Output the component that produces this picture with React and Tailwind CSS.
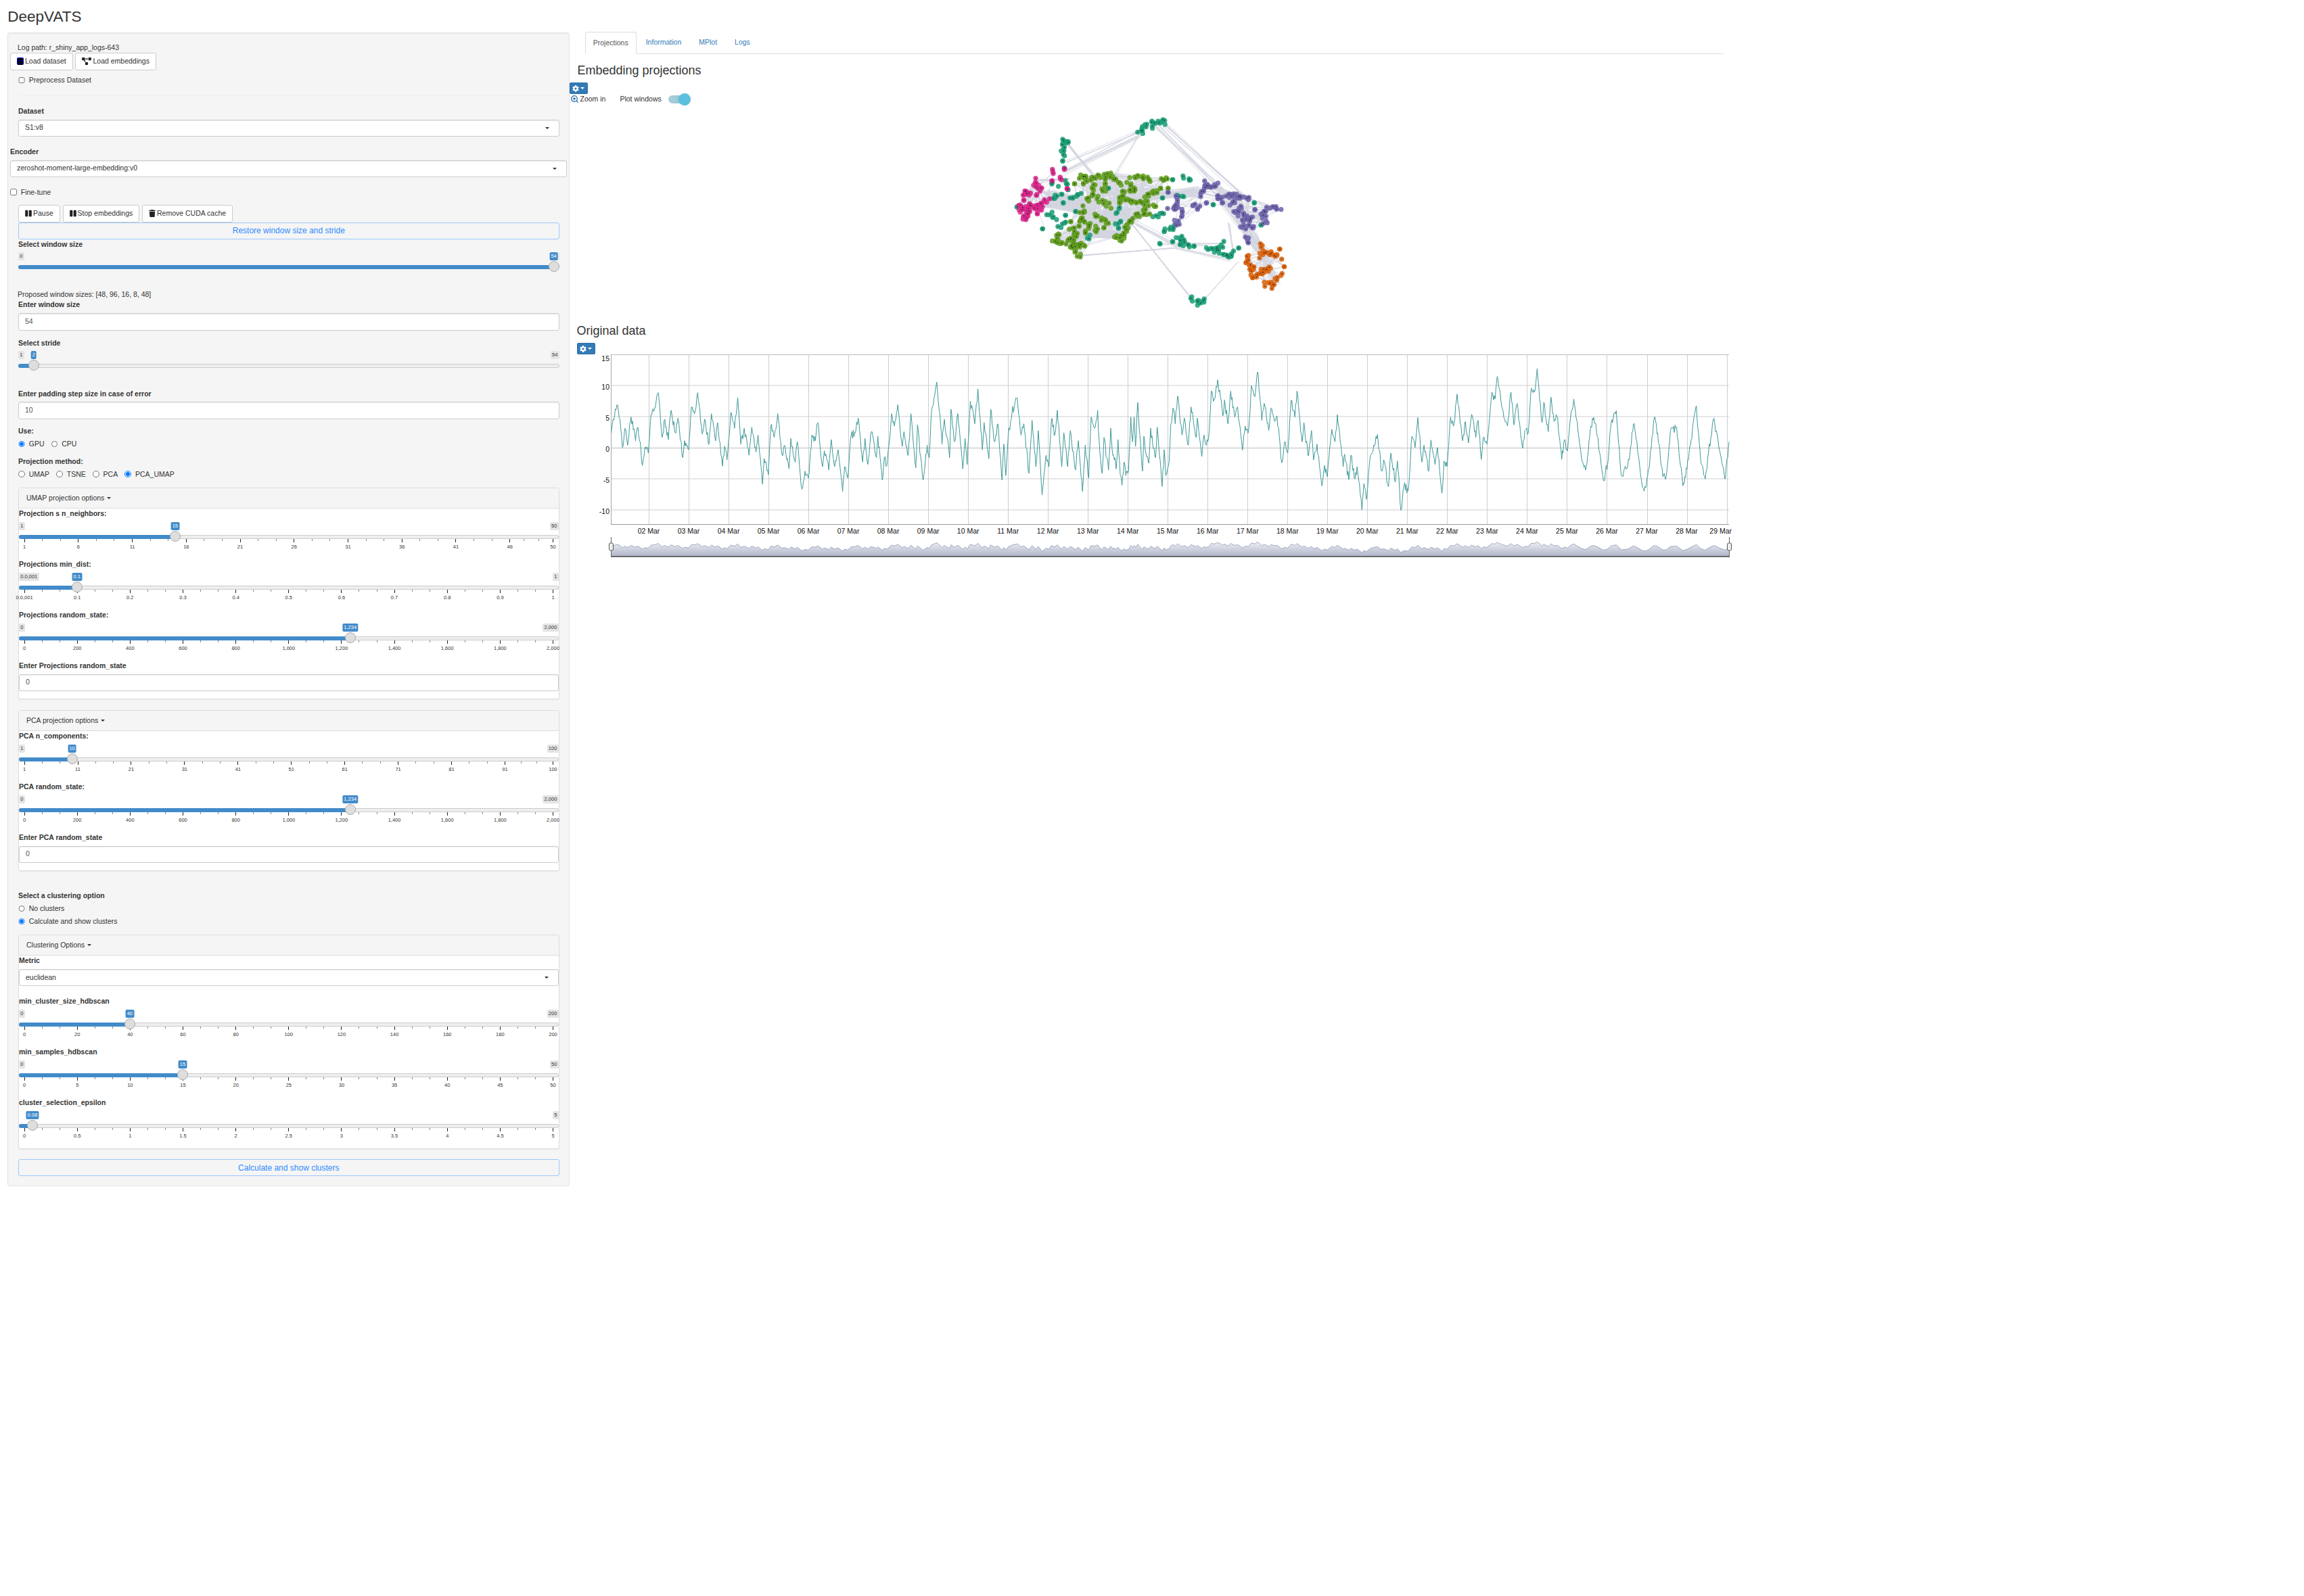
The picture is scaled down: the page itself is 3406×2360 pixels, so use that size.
import React from 'react';
import { FaPause, FaTrash, FaProjectDiagram, FaDatabase, FaCog } from 'react-icons/fa';
import { ZoomIn } from 'lucide-react';

function rng(seed) {
  let a = seed;
  return () => {
    a |= 0; a = (a + 0x6d2b79f5) | 0;
    let t = Math.imul(a ^ (a >>> 15), 1 | a);
    t = (t + Math.imul(t ^ (t >>> 7), 61 | t)) ^ t;
    return ((t ^ (t >>> 14)) >>> 0) / 4294967296;
  };
}

/* ---------- time series, traced from the picture ---------- */
const z7 = [[124,510],[130,450],[143,385],[150,450],[157,575],[165,490],[172,565],[182,440],[195,545],[202,485],[215,655],[222,575],[232,600],[240,430],[250,400],[261,332],[272,530],[280,450],[290,540],[298,410],[310,510],[318,445],[332,620],[337,545],[349,585],[357,395],[368,410],[375,332],[388,515],[395,450],[408,560],[415,425],[427,545],[433,465],[447,658],[453,570],[460,630],[471,420],[482,490],[491,355],[500,560],[510,490],[524,610],[532,485],[544,595],[550,520],[563,738],[568,625],[580,695],[587,480],[597,530],[607,425],[620,610],[626,565],[640,670],[645,535],[658,640],[664,550],[677,760],[686,680],[696,710],[706,520],[716,545],[723,465],[737,660],[742,590],[755,675],[762,540],[772,660],[782,585],[795,770],[801,660],[810,710],[820,520],[832,510],[840,445],[853,640],[860,535],[868,650],[878,505],[893,620],[897,525],[910,720],[916,620],[924,650],[937,425],[945,480],[955,385],[968,570],[973,505],[985,610],[993,425],[1007,665],[1012,475],[1028,720],[1040,565],[1046,620],[1053,410],[1060,355],[1068,285],[1083,560],[1090,450],[1105,620],[1109,405],[1120,550],[1129,425],[1143,670],[1150,535],[1156,650],[1165,370],[1178,470],[1187,315],[1200,585],[1205,465],[1219,625],[1224,405],[1235,550],[1245,470],[1257,720],[1262,560],[1268,700],[1275,520],[1286,420],[1301,355],[1312,520],[1320,470],[1335,690],[1344,455],[1355,660],[1362,500],[1373,785],[1385,610],[1393,660],[1400,450],[1410,520],[1417,410],[1430,660],[1436,510],[1447,660],[1455,500],[1470,675],[1478,545],[1490,770],[1498,565],[1508,710],[1515,440],[1525,490]];
const z12 = [[8,260],[15,400],[28,540],[36,380],[48,470],[56,525],[66,340],[75,460],[85,470],[90,520],[98,390],[108,545],[116,592],[125,490],[133,550],[145,530],[155,290],[163,400],[170,290],[176,420],[186,225],[195,370],[207,530],[213,375],[222,450],[235,495],[243,340],[255,430],[265,470],[272,335],[285,480],[294,598],[303,435],[310,550],[325,490],[332,325],[342,250],[352,320],[362,197],[372,290],[382,370],[392,295],[400,360],[410,415],[422,245],[432,305],[445,380],[450,295],[460,380],[470,465],[480,370],[490,415],[503,350],[512,175],[525,210]];
const z8 = [[0,215],[8,290],[15,375],[20,305],[30,410],[38,265],[50,380],[58,335],[72,527],[80,420],[90,440],[98,240],[108,290],[116,180],[128,395],[135,320],[148,440],[155,340],[165,400],[172,375],[186,583],[194,490],[203,540],[213,305],[224,380],[230,265],[245,490],[250,405],[262,552],[272,440],[278,570],[288,500],[302,685],[310,595],[318,645],[331,435],[340,490],[347,370],[364,600],[368,545],[380,658],[386,550],[398,655],[404,600],[418,792],[424,675],[431,745],[443,550],[452,505],[463,458],[475,620],[481,570],[495,690],[502,540],[515,668],[521,575],[531,793],[540,685],[552,708],[563,465],[572,515],[580,382],[592,580],[598,505],[612,620],[618,482],[630,590],[637,515],[650,718],[656,575],[665,600],[675,380],[685,410],[694,278],[710,485],[718,400],[727,495],[736,368],[748,470],[755,395],[764,568],[770,470],[780,500],[795,270],[804,300],[810,200],[825,340],[840,420],[850,270],[858,415],[868,320],[884,518],[890,440],[900,450],[908,260],[918,270],[926,165],[940,405],[945,315],[958,445],[966,292],[975,400],[985,380],[997,568],[1005,480],[1014,530],[1025,350],[1032,300],[1040,390],[1055,570],[1066,615],[1072,555],[1082,420],[1090,382],[1100,465],[1118,662],[1130,590],[1140,410],[1155,352],[1170,640],[1188,600],[1205,410],[1215,490],[1232,695],[1242,690],[1250,605],[1265,385],[1275,450],[1290,645],[1300,640],[1312,440],[1330,425],[1348,685],[1360,610],[1372,480],[1387,330],[1400,580],[1413,655],[1420,560],[1438,385],[1452,510],[1470,655],[1478,560],[1482,490]];

const seriesCtl = [
  ...z7.map(([x, y]) => [840 + x / 1.96, 470 + y / 3]),
  ...z12.map(([x, y]) => [1620 + x / 3, 520 + y / 3]),
  ...z8.map(([x, y]) => [1800 + x / 1.96, 490 + y / 3]),
];
const series = (() => {
  const r = rng(42);
  const out = [];
  for (let i = 0; i < seriesCtl.length - 1; i++) {
    const [x0, y0] = seriesCtl[i];
    const [x1, y1] = seriesCtl[i + 1];
    const n = Math.max(1, Math.round((x1 - x0) / 1.1));
    for (let k = 0; k < n; k++) {
      const t = k / n;
      const noise = k === 0 ? 0 : (r() - 0.5) * 13;
      out.push([x0 + (x1 - x0) * t, y0 + (y1 - y0) * t + noise]);
    }
  }
  out.push(seriesCtl[seriesCtl.length - 1]);
  return out;
})();
const seriesPath = series.map(([x, y], i) => `${i ? 'L' : 'M'}${x.toFixed(1)} ${y.toFixed(1)}`).join('');
const miniY = (y) => 801 + ((y - 545) / 210) * 16;
const miniLine = seriesCtl.map(([x, y], i) => `${i ? 'L' : 'M'}${x.toFixed(1)} ${miniY(y).toFixed(1)}`).join('');
const miniArea = `${miniLine}L2556 823L903 823Z`;

const days = ['02','03','04','05','06','07','08','09','10','11','12','13','14','15','16','17','18','19','20','21','22','23','24','25','26','27','28','29'];

function Chart() {
  const gridY = [524.5, 570, 616, 662.5, 708, 754];
  const yLabels = [['15', 530], ['10', 572], ['5', 618], ['0', 664], ['-5', 710], ['-10', 756]];
  return (
    <svg width="1730" height="310" viewBox="842 524 1730 310" className="block">
      <defs>
        <linearGradient id="miniFill" x1="0" y1="0" x2="0" y2="1">
          <stop offset="0" stopColor="#eef0f5" />
          <stop offset="1" stopColor="#aeb4c8" />
        </linearGradient>
      </defs>
      {gridY.map((y) => <line key={y} x1="903" x2="2556" y1={y} y2={y} stroke="#bdbdbd" strokeWidth="1" opacity={Number.isInteger(y) ? 0.7 : 1} />)}
      {days.map((d, i) => {
        const x = Math.round(959 + i * 59.02) + 0.5;
        return <line key={d} x1={x} x2={x} y1="524" y2="775" stroke="#cdcdcd" strokeWidth="1" />;
      })}
      <line x1="903.5" x2="903.5" y1="524" y2="775" stroke="#a8a8a8" />
      <line x1="903" x2="2556" y1="775.5" y2="775.5" stroke="#999" />
      <path d={seriesPath} fill="none" stroke="#3f9898" strokeWidth="1" />
      {yLabels.map(([t, y]) => <text key={t} x="901" y={y + 3.7} textAnchor="end" fontSize="10.5" fill="#111">{t}</text>)}
      {days.map((d, i) => (
        i === days.length - 1
          ? <text key={d} x="2560" y="789" textAnchor="end" fontSize="10.5" fill="#111">{d} Mar</text>
          : <text key={d} x={959 + i * 59.02} y="789" textAnchor="middle" fontSize="10.5" fill="#111">{d} Mar</text>
      ))}
      <path d={miniArea} fill="url(#miniFill)" />
      <path d={miniLine} fill="none" stroke="#8e98b5" strokeWidth="0.8" />
      <line x1="903" x2="2557" y1="823" y2="823" stroke="#444" strokeWidth="1.5" />
      <line x1="903.5" x2="903.5" y1="794" y2="823" stroke="#666" />
      <line x1="2556.5" x2="2556.5" y1="794" y2="823" stroke="#666" />
      <rect x="900.5" y="803" width="6" height="11" rx="2" fill="#eee" stroke="#555" />
      <rect x="2553.5" y="803" width="6" height="11" rx="2" fill="#eee" stroke="#555" />
    </svg>
  );
}

/* ---------- projection network, traced from the picture ---------- */
const clusters = [
  { color: '#1b9e77', lines: [
    [[735,145],[745,125],[770,100]], [[795,110],[795,95],[815,85],[855,97]],
    [[400,175],[420,180]], [[400,175],[397,195],[392,235]], [[393,263],[393,265]],
    [[400,295],[402,298]], [[400,350],[415,365]], [[340,365],[365,370]],
    [[415,390],[417,392]], [[470,398],[432,430]], [[365,410],[345,430]], [[388,412],[389,412]],
    [[395,450],[396,450]], [[450,488],[451,488]], [[405,505],[406,505]], [[330,495],[360,520]],
    [[400,535],[380,560]], [[303,565],[304,565]], [[595,385],[596,385]], [[630,490],[648,470]],
    [[630,535],[650,530]], [[640,562],[641,562]], [[510,595],[505,610]], [[880,347],[881,347]],
    [[930,335],[960,340]], [[905,415],[925,420]], [[835,428],[836,428]], [[800,507],[840,500]],
    [[835,570],[890,555]], [[823,630],[825,632]], [[880,622],[881,622]],
    [[905,605],[925,610],[920,630],[955,645]], [[975,642],[976,642]],
    [[1030,658],[1075,660],[1110,630]], [[1075,660],[1135,690],[1150,665]], [[1173,650],[1174,650]],
    [[1060,458],[1061,458]], [[1242,450],[1243,450]], [[1272,548],[1274,548]],
    [[960,868],[1000,900],[1025,875]], [[190,468],[191,468]],
  ] },
  { color: '#d9248a', lines: [
    [[355,300],[345,315]], [[380,330],[385,345]], [[345,352],[346,352]], [[412,387],[413,387]], [[400,300],[401,300]],
    [[265,350],[270,375],[310,380]], [[235,388],[220,412],[250,410],[285,408]],
    [[220,438],[221,438]], [[205,462],[220,515],[240,495],[240,465],[290,450],[330,435]],
    [[205,462],[240,480],[305,475]], [[280,498],[281,498]],
  ] },
  { color: '#5f9c1c', lines: [
    [[470,335],[495,330],[490,370]], [[495,340],[530,340],[600,325],[650,365]],
    [[445,365],[446,365]], [[520,400],[540,370]], [[575,395],[575,350]],
    [[530,420],[600,465]], [[495,440],[515,435]], [[490,470],[470,525],[505,540],[500,590]],
    [[530,510],[600,535]], [[540,550],[540,575]], [[575,560],[577,560]],
    [[700,332],[750,335],[790,345]], [[830,345],[860,345]],
    [[685,365],[720,385],[660,410],[650,430],[760,450],[750,490],[770,500]],
    [[760,425],[830,390]], [[860,385],[861,385]], [[780,462],[805,465]], [[645,450],[646,450]],
    [[735,500],[680,540],[670,590],[630,600],[660,615]],
    [[375,585],[355,620],[398,632]], [[430,560],[455,590],[425,610],[465,630],[425,650],[490,635]],
    [[445,670],[470,688]], [[428,533],[429,533]], [[465,553],[466,553]],
  ] },
  { color: '#6c63ab', lines: [
    [[1020,360],[1010,420]], [[1020,370],[1050,385],[1085,365]], [[1030,450],[1031,450]],
    [[1075,410],[1100,455]], [[1110,430],[1150,415],[1220,435]], [[1140,455],[1170,430]],
    [[1185,465],[1160,490],[1230,520],[1190,530]], [[1245,480],[1246,480]],
    [[1245,550],[1180,560]], [[1210,600],[1212,628]],
    [[1355,470],[1320,470],[1280,495],[1295,540]],
    [[905,425],[895,475],[868,478]], [[965,460],[1000,472]], [[925,480],[915,520]],
    [[890,535],[905,555]], [[860,403],[861,403]],
  ] },
  { color: '#d9620a', lines: [
    [[1270,640],[1285,660]], [[1265,685],[1310,670],[1360,690]], [[1355,655],[1356,655]],
    [[1215,680],[1215,715],[1240,775],[1260,770],[1310,740],[1280,745]],
    [[1375,733],[1376,733]], [[1360,765],[1335,785]], [[1290,810],[1330,810],[1315,825]], [[1240,735],[1241,735]],
  ] },
];

const network = (() => {
  const r = rng(7);
  const pts = clusters.map((c) => {
    const list = [];
    c.lines.forEach((line) => {
      for (let i = 0; i < line.length - 1; i++) {
        const [x0, y0] = line[i];
        const [x1, y1] = line[i + 1];
        const len = Math.hypot(x1 - x0, y1 - y0);
        const n = Math.max(1, Math.round(len / 8));
        for (let k = 0; k <= n; k++) {
          const t = k / n;
          const j = len < 5 ? 0 : 20;
          list.push([x0 + (x1 - x0) * t + (r() - 0.5) * j, y0 + (y1 - y0) * t + (r() - 0.5) * j]);
        }
      }
    });
    return list;
  });
  const edges = [];
  const bundle = (a, b, n, spread) => {
    for (let i = 0; i < n; i++) {
      edges.push([a[0] + (r() - 0.5) * spread, a[1] + (r() - 0.5) * spread, b[0] + (r() - 0.5) * spread, b[1] + (r() - 0.5) * spread]);
    }
  };
  const dense = (list, n, maxD) => {
    let c = 0;
    let guard = 0;
    while (c < n && guard < n * 40) {
      guard++;
      const a = list[Math.floor(r() * list.length)];
      const b = list[Math.floor(r() * list.length)];
      if (Math.hypot(a[0] - b[0], a[1] - b[1]) < maxD) { edges.push([a[0], a[1], b[0], b[1]]); c++; }
    }
  };
  dense(pts[2], 800, 200);
  dense(pts[1], 120, 110);
  dense(pts[3], 220, 150);
  dense(pts[4], 120, 110);
  bundle([330, 430], [520, 470], 130, 80);
  bundle([470, 590], [640, 590], 90, 40);
  bundle([500, 520], [680, 500], 70, 70);
  bundle([760, 420], [1000, 400], 40, 50);
  bundle([800, 100], [1100, 400], 12, 26);
  bundle([845, 100], [1210, 430], 10, 22);
  bundle([735, 145], [400, 310], 9, 30);
  bundle([750, 125], [410, 270], 4, 14);
  bundle([735, 145], [620, 340], 3, 14);
  bundle([415, 190], [960, 868], 7, 8);
  bundle([415, 190], [600, 400], 3, 10);
  bundle([1025, 875], [1170, 710], 3, 6);
  bundle([470, 686], [890, 650], 6, 8);
  bundle([890, 648], [1140, 705], 4, 10);
  bundle([830, 632], [1110, 630], 3, 8);
  bundle([890, 640], [1030, 640], 2, 6);
  bundle([1120, 400], [1340, 470], 3, 8);
  bundle([1200, 540], [1340, 800], 20, 40);
  bundle([1100, 440], [1260, 660], 14, 40);
  bundle([1240, 590], [1300, 700], 12, 30);
  bundle([1130, 540], [1150, 680], 4, 10);
  bundle([720, 540], [900, 640], 8, 24);
  bundle([280, 350], [420, 345], 8, 10);
  bundle([290, 500], [310, 560], 1, 2);
  return { pts, edges };
})();

function Network() {
  return (
    <svg width="500" height="320" viewBox="0 15 1500 960" className="block">
      {network.edges.map((e, i) => (
        <line key={i} x1={e[0]} y1={e[1]} x2={e[2]} y2={e[3]} stroke="#d3d5e0" strokeWidth="3" opacity="0.8" />
      ))}
      {network.pts.map((list, ci) => list.map((p, i) => (
        <circle key={`${ci}-${i}`} cx={p[0]} cy={p[1]} r="11" fill={clusters[ci].color} opacity="0.85" />
      )))}
      {network.pts.map((list, ci) => list.filter((_, i) => i % 2 === 0).map((p, i) => (
        <circle key={`d${ci}-${i}`} cx={p[0]} cy={p[1]} r="2.5" fill="#2b2b2b" />
      )))}
    </svg>
  );
}

/* ---------- small form widgets ---------- */
function Caret({ color }) {
  return <span className={`inline-block w-0 h-0 border-x-[3px] border-t-[3px] border-x-transparent ${color === 'white' ? 'border-t-white' : 'border-t-[#333333]'}`} />;
}

function Label({ children, className = '' }) {
  return <div className={`h-[15px] leading-[15px] font-bold text-[#333333] ${className}`}>{children}</div>;
}

function Btn({ icon, children }) {
  return (
    <div className="h-[25.5px] px-[9px] flex items-center gap-[2px] bg-white border border-[#cccccc] rounded-[3px] text-[#333333] whitespace-nowrap">
      {icon}
      <span>{children}</span>
    </div>
  );
}

function Field({ children, className = '', caret = false }) {
  return (
    <div className={`h-[25.5px] px-[9px] flex items-center justify-between bg-white border border-[#cccccc] rounded-[3px] shadow-[inset_0_1px_1px_rgba(0,0,0,0.075)] ${className}`}>
      <span>{children}</span>
      {caret && <span className="mr-[5px] flex"><Caret /></span>}
    </div>
  );
}

function Outline({ children, className = '' }) {
  return (
    <div className={`w-[799.6px] ml-[15px] h-[25px] flex items-center justify-center border border-[#9cc8fb] rounded-[3px] text-[12px] text-[#2f8bff] ${className}`}>
      {children}
    </div>
  );
}

function Radio({ label, checked = false, name, className = '' }) {
  return (
    <label className={`flex items-center gap-[6px] h-[15px] leading-[15px] ${className}`}>
      <input type="radio" name={name} checked={checked} readOnly className="w-[9.75px] h-[9.75px]" />
      <span>{label}</span>
    </label>
  );
}

function Check({ label, className = '' }) {
  return (
    <label className={`flex items-center gap-[6px] h-[15px] leading-[15px] ${className}`}>
      <input type="checkbox" className="w-[9.75px] h-[9.75px]" />
      <span>{label}</span>
    </label>
  );
}

const fmt = (n) => String(n).replace(/\B(?=(\d{3})+(?!\d))/g, ',');

function Slider({ label, min, max, value, ticks, panel = false, hideMin = false, height = 'h-[75px]' }) {
  const start = panel ? 7.6 : 8;
  const end = panel ? 789 : 791.6;
  const pos = (v) => start + ((v - min) / (max - min)) * (end - start);
  const hx = pos(value);
  return (
    <div className={`relative ${height} ${panel ? '' : 'w-[799.6px] ml-[15px]'}`}>
      <Label>{label}</Label>
      {!hideMin && (
        <span className="absolute left-0 top-[19.5px] h-[12px] leading-[12px] px-[2.25px] rounded-[2px] bg-[#e4e4e4] text-[7.5px] text-[#333333]">{fmt(min)}</span>
      )}
      <span className="absolute right-0 top-[19.5px] h-[12px] leading-[12px] px-[2.25px] rounded-[2px] bg-[#e4e4e4] text-[7.5px] text-[#333333]">{fmt(max)}</span>
      <span
        className="absolute top-[19.5px] h-[12px] leading-[12px] px-[2.25px] -translate-x-1/2 rounded-[2px] bg-[#428bca] text-[7.5px] text-white whitespace-nowrap"
        style={{ left: hx }}
      >{fmt(value)}</span>
      <div className="absolute left-0 right-0 top-[38.5px] h-[6px] rounded-full bg-[#eeeeee] border border-[#cccccc]" />
      <div className="absolute left-0 top-[38.5px] h-[6px] rounded-l-full bg-[#428bca]" style={{ width: hx }} />
      {ticks && ticks.map((t, i) => {
        const x = pos(t);
        const next = i < ticks.length - 1 ? pos(ticks[i + 1]) : null;
        return (
          <React.Fragment key={t}>
            <div className="absolute top-[44.5px] w-[1px] h-[5.5px] bg-[#222222]" style={{ left: x }} />
            {next !== null && [1, 2].map((k) => (
              <div key={k} className="absolute top-[44.5px] w-[1px] h-[3px] bg-[#888888]" style={{ left: x + ((next - x) * k) / 3 }} />
            ))}
            <span className="absolute top-[52px] h-[10px] leading-[10px] -translate-x-1/2 text-[7.5px] text-[#333333] whitespace-nowrap" style={{ left: x + 0.5 }}>{fmt(t)}</span>
          </React.Fragment>
        );
      })}
      <div className="absolute top-[32.5px] w-[16px] h-[16px] -translate-x-1/2 rounded-full bg-[#dedede] border border-[#ababab]" style={{ left: hx }} />
    </div>
  );
}

function Panel({ title, className = '', children }) {
  return (
    <div className={`w-[799.6px] ml-[15px] bg-white border border-[#dddddd] rounded-[3px] shadow-[0_1px_1px_rgba(0,0,0,0.05)] ${className}`}>
      <div className="h-[30px] pl-[11px] flex items-center gap-[4px] bg-[#f5f5f5] border-b border-[#dddddd] text-[#333333]">
        <span>{title}</span>
        <Caret />
      </div>
      {children}
    </div>
  );
}

const range = (a, b, s) => { const o = []; for (let v = a; v <= b + 1e-9; v += s) o.push(Number(v.toFixed(2))); return o; };
const ticks0_2000 = range(0, 2000, 200);

function Sidebar() {
  return (
    <div className="ml-[11px] mt-[1px] w-[830.5px] h-[1706px] bg-[#f5f5f5] border border-[#e3e3e3] rounded-[3px] shadow-[inset_0_1px_1px_rgba(0,0,0,0.05)] pt-[13.5px] shrink-0">
      <div className="ml-[14px] h-[15px] leading-[15px]">Log path: r_shiny_app_logs-643</div>
      <div className="ml-[3px] mt-[0.5px] flex gap-[3.75px]">
        <Btn icon={<span className="w-[10px] h-[11px] bg-[#0000d0] rounded-[2px] flex items-center justify-center"><FaDatabase className="w-[10px] h-[10px] text-black" /></span>}>Load dataset</Btn>
        <Btn icon={<FaProjectDiagram className="w-[14px] h-[11px] text-[#222222]" />}>Load embeddings</Btn>
      </div>
      <Check label="Preprocess Dataset" className="ml-[15px] mt-[7.5px]" />
      <div className="ml-[15px] w-[799.6px] mt-[15px] h-[1px] bg-[#eeeeee]" />
      <Label className="ml-[15px] mt-[14.5px]">Dataset</Label>
      <Field caret className="ml-[15px] w-[799.6px] mt-[5px] text-[#333333]">S1:v8</Field>
      <Label className="ml-[3px] mt-[14.5px]">Encoder</Label>
      <Field caret className="ml-[3px] w-[822.6px] mt-[5px] text-[#333333]">zeroshot-moment-large-embedding:v0</Field>
      <Check label="Fine-tune" className="ml-[3px] mt-[14.5px]" />
      <div className="ml-[15px] mt-[11.5px] flex gap-[3.75px]">
        <Btn icon={<FaPause className="w-[10px] h-[11px] text-[#222222]" />}>Pause</Btn>
        <Btn icon={<FaPause className="w-[10px] h-[11px] text-[#222222]" />}>Stop embeddings</Btn>
        <Btn icon={<FaTrash className="w-[10px] h-[11px] text-[#222222]" />}>Remove CUDA cache</Btn>
      </div>
      <Outline>Restore window size and stride</Outline>
      <Slider label="Select window size" min={0} max={54} value={54} height="h-[74.5px]" />
      <div className="ml-[14px] h-[15px] leading-[15px]">Proposed window sizes: [48, 96, 16, 8, 48]</div>
      <Label className="ml-[15px]">Enter window size</Label>
      <Field className="ml-[15px] w-[799.6px] mt-[5px] text-[#555555]">54</Field>
      <div className="mt-[11px]">
        <Slider label="Select stride" min={1} max={54} value={2} />
      </div>
      <Label className="ml-[15px]">Enter padding step size in case of error</Label>
      <Field className="ml-[15px] w-[799.6px] mt-[4.5px] text-[#555555]">10</Field>
      <Label className="ml-[15px] mt-[10px]">Use:</Label>
      <div className="ml-[15px] mt-[4.5px] flex gap-[10px]">
        <Radio name="use" label="GPU" checked />
        <Radio name="use" label="CPU" />
      </div>
      <Label className="ml-[15px] mt-[10.5px]">Projection method:</Label>
      <div className="ml-[15px] mt-[4px] flex gap-[10px]">
        <Radio name="pm" label="UMAP" />
        <Radio name="pm" label="TSNE" />
        <Radio name="pm" label="PCA" />
        <Radio name="pm" label="PCA_UMAP" checked />
      </div>
      <Panel title="UMAP projection options" className="mt-[12.5px] h-[313px]">
        <Slider panel label="Projection s n_neighbors:" min={1} max={50} value={15} ticks={[...range(1, 46, 5), 50]} />
        <Slider panel label="Projections min_dist:" min={0.0001} max={1} value={0.1} ticks={[0.0001, ...range(0.1, 1, 0.1)]} />
        <Slider panel label="Projections random_state:" min={0} max={2000} value={1234} ticks={ticks0_2000} />
        <Label>Enter Projections random_state</Label>
        <Field className="mt-[4.5px] text-[#555555]">0</Field>
      </Panel>
      <Panel title="PCA projection options" className="mt-[16px] h-[237.7px]">
        <Slider panel label="PCA n_components:" min={1} max={100} value={10} ticks={[...range(1, 91, 10), 100]} />
        <Slider panel label="PCA random_state:" min={0} max={2000} value={1234} ticks={ticks0_2000} />
        <Label>Enter PCA random_state</Label>
        <Field className="mt-[4.5px] text-[#555555]">0</Field>
      </Panel>
      <Label className="ml-[15px] mt-[29.3px]">Select a clustering option</Label>
      <Radio name="cl" label="No clusters" className="ml-[15px] mt-[4px]" />
      <Radio name="cl" label="Calculate and show clusters" checked className="ml-[15px] mt-[4px]" />
      <Panel title="Clustering Options" className="mt-[12px] h-[317px]">
        <Label>Metric</Label>
        <Field caret className="mt-[5px] text-[#333333]">euclidean</Field>
        <div className="mt-[15px]">
          <Slider panel label="min_cluster_size_hdbscan" min={0} max={200} value={40} ticks={range(0, 200, 20)} />
          <Slider panel label="min_samples_hdbscan" min={0} max={50} value={15} ticks={range(0, 50, 5)} />
          <Slider panel hideMin label="cluster_selection_epsilon" min={0} max={5} value={0.08} ticks={range(0, 5, 0.5)} />
        </div>
      </Panel>
      <Outline className="mt-[15.5px]">Calculate and show clusters</Outline>
    </div>
  );
}

function GearBtn({ className = '' }) {
  return (
    <div className={`w-[27px] h-[17px] flex items-center justify-center gap-[2px] bg-[#337ab7] border border-[#2e6da4] rounded-[2px] ${className}`}>
      <FaCog className="w-[10px] h-[10px] text-white" />
      <Caret color="white" />
    </div>
  );
}

function Main() {
  return (
    <div className="flex-1 min-w-0">
      <div className="ml-[23px] w-[1683px] flex items-end border-b border-[#dddddd] h-[33px] gap-[1.5px]">
        <div className="h-[33px] px-[11.25px] flex items-center bg-white border border-[#dddddd] border-b-white rounded-t-[3px] text-[#555555] -mb-[1px]">Projections</div>
        <div className="h-[32px] px-[12.25px] flex items-center text-[#337ab7]">Information</div>
        <div className="h-[32px] px-[12.25px] flex items-center text-[#337ab7]">MPlot</div>
        <div className="h-[32px] px-[12.25px] flex items-center text-[#337ab7]">Logs</div>
      </div>
      <h3 className="ml-[12px] mt-[14px] h-[20px] leading-[20px] text-[18px] text-[#333333]">Embedding projections</h3>
      <GearBtn className="mt-[8px]" />
      <div className="h-[15px] flex items-center ml-[1px]">
        <ZoomIn className="w-[13px] h-[13px] text-[#2f72b0]" strokeWidth={2.5} />
        <span className="ml-[2px] text-[#333333]">Zoom in</span>
        <span className="ml-[21px] text-[#333333]">Plot windows</span>
        <span className="relative ml-[10px] w-[32px] h-[12px] rounded-full bg-gradient-to-r from-[#a9cfda] to-[#8cc3d3]">
          <span className="absolute right-[-1px] top-[-3px] w-[18px] h-[18px] rounded-full bg-[#5bc0de] shadow-[0_0_2px_rgba(0,0,0,0.2)]" />
        </span>
      </div>
      <div className="ml-[598px] mt-[1px]"><Network /></div>
      <h3 className="ml-[11px] mt-[4px] h-[20px] leading-[20px] text-[18px] text-[#333333]">Original data</h3>
      <GearBtn className="ml-[11px] mt-[8px]" />
      <Chart />
    </div>
  );
}

export default function App() {
  return (
    <div className="w-[3406px] min-h-[2360px] bg-white text-[10.5px] text-[#333333] font-['Liberation_Sans',Arial,sans-serif]">
      <h2 className="h-[47px] pl-[11.25px] pt-[11px] leading-[28px] text-[22.5px] text-[#333333]">DeepVATS</h2>
      <div className="flex items-start">
        <Sidebar />
        <Main />
      </div>
    </div>
  );
}
